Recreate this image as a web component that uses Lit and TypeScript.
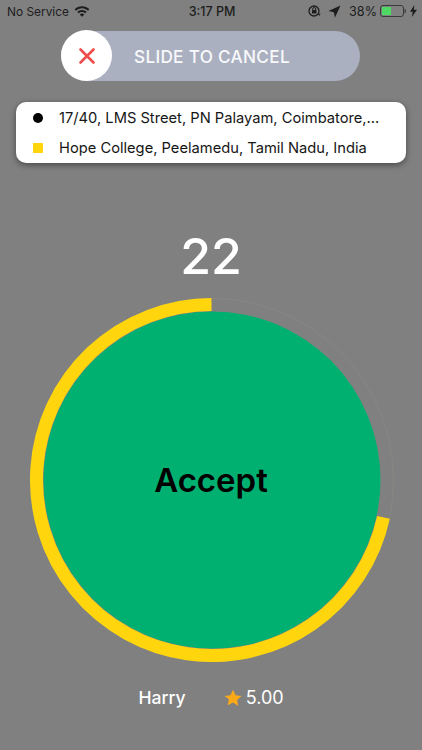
import { LitElement, html, css } from "lit";
import { customElement } from "lit/decorators.js";

const cx = 182, cy = 182, r = 175.5;
const endDeg = 102.3;
const a = (endDeg * Math.PI) / 180;
const ex = cx + r * Math.sin(a), ey = cy - r * Math.cos(a);
const arc = `M ${ex.toFixed(2)} ${ey.toFixed(2)} A ${r} ${r} 0 1 1 ${cx - 0.5} ${cy - r}`;

@customElement("app-root")
export class AppRoot extends LitElement {
  static styles = css`
    :host { display: block; width: 422px; height: 750px; background: #808080; overflow: hidden;
      font-family: Inter, "Noto Sans", "Liberation Sans", sans-serif; color: #fff; }
    .page { display: flex; flex-direction: column; height: 750px; }
    .status { height: 22px; flex: none; display: grid; grid-template-columns: 1fr auto 1fr; align-items: center;
      padding: 0 5px 0 7px; color: #1d1d1d; font-size: 11.9px; }
    .status .left, .status .right { display: flex; align-items: center; }
    .status .left { gap: 5px; }
    .status .right { justify-content: flex-end; }
    .time { font-weight: 500; font-size: 12.5px; }
    .pct { margin: 0 3px 0 8px; font-size: 12.6px; }
    .slider-row { display: flex; margin: 9px 0 0 61px; flex: none; }
    .slider { width: 299px; height: 50px; border-radius: 25px; background: #abb0c0; display: flex; align-items: center; }
    .knob { width: 51px; height: 51px; border-radius: 50%; background: #fff; display: flex; align-items: center; justify-content: center; flex: none; margin-top: -0.5px; }
    .slide-text { margin-left: 22px; font-size: 17.2px; font-weight: 500; color: #f8f9fb; letter-spacing: 0.3px; }
    .card { margin: 21px 16px 0; height: 61px; flex: none; box-sizing: border-box; background: #fff; border-radius: 10px;
      box-shadow: 0 2px 6px rgba(0,0,0,0.45); display: flex; flex-direction: column; justify-content: center; gap: 8px; color: #161616; font-size: 14.7px; }
    .line { display: flex; align-items: center; height: 22px; padding-left: 17px; white-space: nowrap; }
    .dot { width: 10px; height: 10px; flex: none; background: #000; border-radius: 50%; margin-right: 16px; }
    .sq { width: 10px; height: 10px; flex: none; background: #ffd60e; margin-right: 16px; }
    .count { margin-top: 60px; height: 58px; flex: none; text-align: center; font-size: 50px; line-height: 66px; font-weight: 500; }
    .dial-row { display: flex; justify-content: center; margin-top: 17px; padding-left: 1px; flex: none; }
    .dial { display: grid; width: 364px; height: 364px; }
    .dial > * { grid-area: 1 / 1; }
    .dial svg { display: block; }
    .accept { align-self: center; justify-self: center; color: #000; font-size: 33px; font-weight: 600; margin-right: 1px; }
    .driver { display: flex; align-items: center; justify-content: center; margin-top: 25px; font-size: 17.6px; color: #fff; flex: none; }
    .driver .name { margin-right: 38px; font-weight: 500; }
    .driver svg { margin-right: 4px; }
    .rating { font-size: 18px; }
  `;

  render() {
    return html`<div class="page">
      <div class="status">
        <div class="left"><span>No Service</span>
          <svg width="16" height="12" viewBox="0 0 16 12"><path fill="#1d1d1d" d="M8 1.2c2.9 0 5.5 1.1 7.4 3L14 5.7C12.4 4.2 10.300 3.300 8 3.300S3.600 4.200 2 5.700L.6 4.200c1.900-1.900 4.500-3 7.400-3zm0 3.700c1.800 0 3.400.7 4.700 1.800l-1.500 1.500C10.300 7.500 9.200 7.100 8 7.100s-2.300.4-3.200 1.100L3.300 6.700C4.600 5.600 6.200 4.900 8 4.900zm0 3.700c.9 0 1.700.3 2.300.9L8 11.800 5.700 9.500c.6-.6 1.400-.9 2.300-.9z"/></svg>
        </div>
        <div class="time">3:17 PM</div>
        <div class="right">
          <svg width="14" height="14" viewBox="0 0 14 14"><circle cx="7" cy="7" r="5" fill="none" stroke="#1d1d1d" stroke-width="1.300"/><rect x="5" y="6" width="4.500" height="3.500" rx=".6" fill="#1d1d1d"/><path d="M5.700 6V5a1.500 1.500 0 0 1 3 0v1" fill="none" stroke="#1d1d1d" stroke-width="1"/><path d="M11 10l2.500-.5-1 2.500z" fill="#1d1d1d"/></svg>
          <svg style="margin-left:7px" width="13" height="13" viewBox="0 0 13 13"><path fill="#1d1d1d" d="M12.500.5L7 12.500 5.800 7.200.5 6z"/></svg>
          <span class="pct">38%</span>
          <svg width="27" height="12" viewBox="0 0 27 12"><rect x=".5" y=".5" width="23" height="11" rx="2.500" fill="none" stroke="#3a3a3a"/><rect x="2" y="2" width="9" height="8" fill="#4cd964"/><rect x="24.500" y="4" width="1.200" height="4" fill="#3a3a3a"/></svg>
          <svg style="margin-left:3px" width="7" height="12" viewBox="0 0 7 12"><path fill="#1d1d1d" d="M4.300 0L0 6.800h2.700L1.900 12 7 4.800H3.900z"/></svg>
        </div>
      </div>
      <div class="slider-row"><div class="slider">
        <div class="knob"><svg width="18" height="18" viewBox="0 0 18 18"><path d="M2.500 2.500l13 13M15.500 2.500l-13 13" stroke="#ee4b4b" stroke-width="2.600" stroke-linecap="round"/></svg></div>
        <span class="slide-text">SLIDE TO CANCEL</span>
      </div></div>
      <div class="card">
        <div class="line"><span class="dot"></span><span>17/40, LMS Street, PN Palayam, Coimbatore,...</span></div>
        <div class="line"><span class="sq"></span><span>Hope College, Peelamedu, Tamil Nadu, India</span></div>
      </div>
      <div class="count">22</div>
      <div class="dial-row"><div class="dial">
        <svg width="364" height="364" viewBox="0 0 364 364">
          <circle cx="${cx}" cy="${cy}" r="181.500" fill="none" stroke="#8a8782" stroke-width="1"/>
          <circle cx="${cx}" cy="${cy}" r="168.500" fill="#00b070"/>
          <path d="${arc}" fill="none" stroke="#ffd60e" stroke-width="13"/>
        </svg>
        <div class="accept">Accept</div>
      </div></div>
      <div class="driver"><span class="name">Harry</span>
        <svg width="18" height="18" viewBox="0 0 24 24"><path fill="#fba919" d="M12 1l3.400 7.300 7.900 1-5.800 5.500 1.500 7.900L12 18l-7 3.700 1.500-7.900L.7 9.300l7.900-1z"/></svg>
        <span class="rating">5.00</span>
      </div>
    </div>`;
  }
}
